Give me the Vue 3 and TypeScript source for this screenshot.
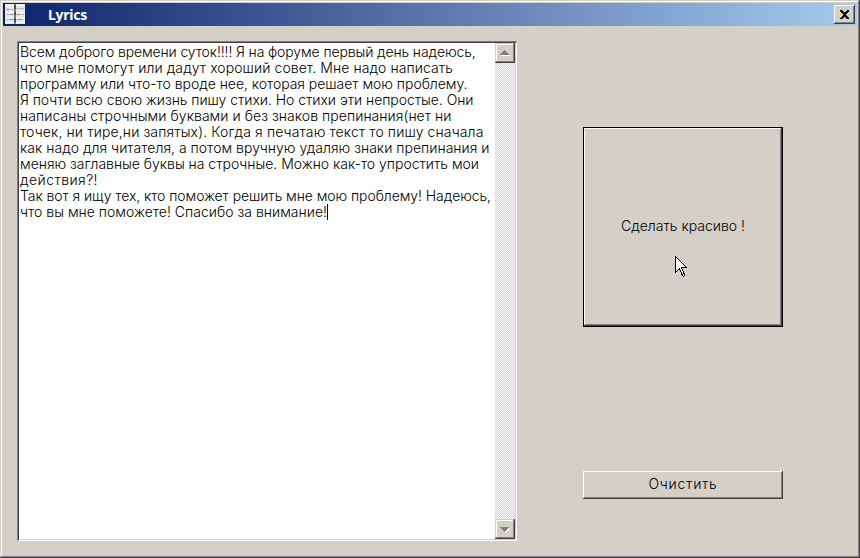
<script setup lang="ts">
import { ref } from 'vue'

interface Line {
  text: string
  width: number
}

const lines: Line[] = [
  { text: 'Всем доброго времени суток!!!! Я на форуме первый день надеюсь,', width: 455.5 },
  { text: 'что мне помогут или дадут хороший совет. Мне надо написать', width: 433 },
  { text: 'программу или что-то вроде нее, которая решает мою проблему.', width: 447.5 },
  { text: 'Я почти всю свою жизнь пишу стихи. Но стихи эти непростые. Они', width: 453.5 },
  { text: 'написаны строчными буквами и без знаков препинания(нет ни', width: 431.5 },
  { text: 'точек, ни тире,ни запятых). Когда я печатаю текст то пишу сначала', width: 463.5 },
  { text: 'как надо для читателя, а потом вручную удаляю знаки препинания и', width: 469.5 },
  { text: 'меняю заглавные буквы на строчные. Можно как-то упростить мои', width: 459 },
  { text: 'действия?!', width: 78 },
  { text: 'Так вот я ищу тех, кто поможет решить мне мою проблему! Надеюсь,', width: 471 },
  { text: 'что вы мне поможете! Спасибо за внимание!', width: 307 },
]

const active = ref(lines.length - 1)

// Tracks the letters so that a run of text takes exactly the given width.
const vFit = {
  mounted(el: HTMLElement, binding: { value: number }) {
    const natural = el.getBoundingClientRect().width
    const count = (el.textContent ?? '').length
    el.style.letterSpacing = `${(binding.value - natural) / count}px`
  },
}
</script>

<template>
  <div class="window">
    <header class="titlebar">
      <svg class="app-icon" width="20" height="20" viewBox="0 0 20 20" shape-rendering="crispEdges">
        <rect width="20" height="20" fill="#e6e6e6" />
        <path d="M0 1.5H9M11 1.5H20M0 8.5H9M11 8.5H20M0 13.5H9M11 13.5H20M0 18.5H9M11 18.5H20" stroke="#fafafa" />
        <path d="M1 5.5H9M11 4.5H19M1 10.5H9M11 10.5H19M1 15.5H9M11 15.5H18" stroke="#bdbdbd" />
        <path d="M2 5.5H4M6 10.5H8M5 15.5H8M12 10.5H14M14 15.5H16" stroke="#8a8a8a" />
        <rect x="9" width="2" height="20" fill="#808080" />
        <path d="M9 1h2v4h-2zM9 8h2v3h-2zM9 14h2v4h-2z" fill="#4a4a4a" />
      </svg>
      <span class="title"><span v-fit="39">Lyrics</span></span>
      <button class="close" aria-label="Close">
        <svg width="9" height="9" viewBox="0 0 9 9" shape-rendering="crispEdges">
          <path d="M0 0h2v1h1v1h1v1h1v-1h1v-1h1v-1h2v1h-1v1h-1v1h-1v1h-1v1h1v1h1v1h1v1h1v1h-2v-1h-1v-1h-1v-1h-1v1h-1v1h-1v1h-2v-1h1v-1h1v-1h1v-1h1v-1h-1v-1h-1v-1h-1v-1h-1z" stroke="#000" stroke-width=".6" />
        </svg>
      </button>
    </header>
    <main class="body">
      <section class="memo">
        <div class="text">
          <div v-for="(line, i) in lines" :key="i" class="line">
            <span v-fit="line.width">{{ line.text }}</span><i v-if="i === active" class="caret"></i>
          </div>
        </div>
        <div class="scrollbar">
          <div class="arrow">
            <svg width="10" height="6" viewBox="0 0 10 6" shape-rendering="crispEdges">
              <path d="M5 1h1v1h1v1h1v1h1v1h1v1h-9v-1h1v-1h1v-1h1v-1h1z" fill="#fff" />
              <path d="M4 0h1v1h1v1h1v1h1v1h1v1h-9v-1h1v-1h1v-1h1v-1h1z" fill="#808080" />
            </svg>
          </div>
          <div class="track"></div>
          <div class="arrow">
            <svg width="10" height="6" viewBox="0 0 10 6" shape-rendering="crispEdges">
              <path d="M1 2h9v1h-1v1h-1v1h-1v1h-1v1h-1v-1h-1v-1h-1v-1h-1v-1h-1z" fill="#fff" />
              <path d="M0 1h9v1h-1v1h-1v1h-1v1h-1v1h-1v-1h-1v-1h-1v-1h-1v-1h-1z" fill="#808080" />
            </svg>
          </div>
        </div>
      </section>
      <section class="actions">
        <button class="primary"><span v-fit="124">Сделать красиво !</span></button>
        <button class="clear"><span v-fit="69">Очистить</span></button>
      </section>
    </main>
    <svg class="pointer" width="13" height="22" viewBox="0 0 13 22" shape-rendering="crispEdges">
      <path d="M.5 .5V16.5L4.5 12.9L7.5 19.5L8.5 20.5L9.5 19.5V18.5L6.7 12.5V11.5H11.5Z" fill="#fff" stroke="#000" />
    </svg>
  </div>
</template>

<style>
body {
  margin: 0;
}
</style>

<style scoped>
.window {
  position: relative;
  box-sizing: border-box;
  width: 860px;
  height: 558px;
  padding: 3px;
  background: #d4d0c8;
  box-shadow: inset -1px -1px #404040, inset 1px 1px #d4d0c8, inset -2px -2px #808080, inset 2px 2px #fff;
  font-family: Inter, "Liberation Sans", sans-serif;
  font-size: 14px;
  font-weight: 300;
  color: #000;
  overflow: hidden;
}
.titlebar {
  display: flex;
  align-items: center;
  box-sizing: border-box;
  height: 23px;
  padding: 0 2px;
  background: linear-gradient(90deg, #0a246a, #a6caf0);
}
.app-icon {
  display: block;
  margin-top: -1px;
}
.title {
  flex: 1;
  padding-left: 23px;
  font: bold 14px/22px "Noto Sans", "Open Sans", sans-serif;
  color: #fff;
}
button {
  display: flex;
  align-items: center;
  justify-content: center;
  box-sizing: border-box;
  margin: 0;
  padding: 0;
  border: 0;
  background: #d4d0c8;
  font: inherit;
  color: inherit;
  box-shadow: inset -1px -1px #404040, inset 1px 1px #fff, inset -2px -2px #808080;
}
.close {
  width: 21px;
  height: 19px;
  padding: 0 1px 1px 0;
}
.body {
  display: flex;
  gap: 66px;
  padding: 15px 0 0 14px;
}
.memo {
  display: flex;
  box-sizing: border-box;
  width: 500px;
  height: 500px;
  padding: 2px;
  background: #fff;
  box-shadow: inset 1px 1px #808080, inset -1px -1px #fff, inset 2px 2px #404040, inset -2px -2px #d4d0c8;
}
.text {
  flex: 1;
  width: 0;
  padding: 1px 0 0 1px;
}
.line {
  display: flex;
  height: 16px;
  line-height: 16px;
  white-space: pre;
}
.caret {
  width: 1px;
  height: 16px;
  background: #000;
}
.scrollbar {
  display: flex;
  flex-direction: column;
  width: 20px;
}
.arrow {
  display: flex;
  align-items: center;
  justify-content: center;
  height: 20px;
  background: #d4d0c8;
  box-shadow: inset -1px -1px #404040, inset 1px 1px #d4d0c8, inset -2px -2px #808080, inset 2px 2px #fff;
}
.arrow svg {
  overflow: visible;
}
.track {
  flex: 1;
  background: repeating-conic-gradient(#d4d0c8 0 25%, #fff 0 50%) 0 0 / 2px 2px;
}
.actions {
  display: flex;
  flex-direction: column;
  gap: 144px;
  padding-top: 86px;
}
.primary {
  width: 200px;
  height: 200px;
  padding-bottom: 3px;
  border: 1px solid #000;
}
.clear {
  width: 200px;
  height: 28px;
  padding-bottom: 3px;
}
.pointer {
  position: absolute;
  left: 675px;
  top: 256px;
}
</style>
